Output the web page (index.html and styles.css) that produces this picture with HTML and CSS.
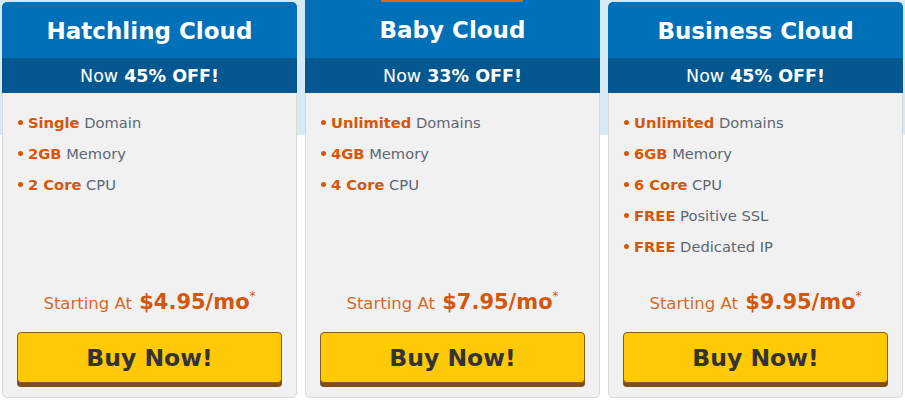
FILE: index.html
```html
<!DOCTYPE html>
<html>
<head>
<meta charset="utf-8">
<link rel="stylesheet" href="styles.css">
</head>
<body>
<div class="page">
  <div class="plans">
    <div class="card">
      <div class="head"><h2 class="title">Hatchling Cloud</h2></div>
      <div class="deal">Now <b>45% OFF!</b></div>
      <div class="body">
        <ul class="features">
          <li><span class="hl">Single</span> Domain</li>
          <li><span class="hl">2GB</span> Memory</li>
          <li><span class="hl">2 Core</span> CPU</li>
        </ul>
        <div class="price">Starting At <b>$4.95/mo</b><sup>*</sup></div>
        <button class="buy">Buy Now!</button>
      </div>
    </div>
    <div class="card featured">
      <div class="ribbon"></div>
      <div class="head"><h2 class="title">Baby Cloud</h2></div>
      <div class="deal">Now <b>33% OFF!</b></div>
      <div class="body">
        <ul class="features">
          <li><span class="hl">Unlimited</span> Domains</li>
          <li><span class="hl">4GB</span> Memory</li>
          <li><span class="hl">4 Core</span> CPU</li>
        </ul>
        <div class="price">Starting At <b>$7.95/mo</b><sup>*</sup></div>
        <button class="buy">Buy Now!</button>
      </div>
    </div>
    <div class="card">
      <div class="head"><h2 class="title">Business Cloud</h2></div>
      <div class="deal">Now <b>45% OFF!</b></div>
      <div class="body">
        <ul class="features">
          <li><span class="hl">Unlimited</span> Domains</li>
          <li><span class="hl">6GB</span> Memory</li>
          <li><span class="hl">6 Core</span> CPU</li>
          <li><span class="hl">FREE</span> Positive SSL</li>
          <li><span class="hl">FREE</span> Dedicated IP</li>
        </ul>
        <div class="price">Starting At <b>$9.95/mo</b><sup>*</sup></div>
        <button class="buy">Buy Now!</button>
      </div>
    </div>
  </div>
</div>
</body>
</html>
```
FILE: styles.css
```css
html, body {
  margin: 0;
  padding: 0;
}
body {
  width: 905px;
  height: 401px;
  overflow: hidden;
  font-family: "DejaVu Sans", "Liberation Sans", sans-serif;
  background: linear-gradient(#d6ebf5 0, #d6ebf5 135px, #ffffff 135px);
}
.page {
  padding: 0 2px;
}
.plans {
  display: flex;
  gap: 8px;
  align-items: flex-start;
}
.card {
  width: 295px;
  margin-top: 2px;
  display: flex;
  flex-direction: column;
  position: relative;
}
.card.featured {
  margin-top: 0;
}
.ribbon {
  position: absolute;
  left: 76px;
  top: 0;
  width: 142px;
  height: 2px;
  background: #dd6a13;
}
.head {
  background: #0070b8;
  height: 56px;
  border-radius: 5px 5px 0 0;
  display: flex;
  align-items: center;
  justify-content: center;
}
.featured .head {
  height: 58px;
  border-radius: 0;
}
.title {
  margin: 0;
  color: #fff;
  font-size: 23px;
  font-weight: 700;
  letter-spacing: 0;
  padding-top: 1px;
}
.deal {
  background: #04578f;
  height: 35px;
  display: flex;
  align-items: center;
  justify-content: center;
  color: #fff;
  font-size: 17.5px;
}
.deal b {
  font-weight: 700;
  margin-left: 6px;
}
.body {
  background: #f1f1f1;
  border: 1px solid #d9d9d9;
  border-top: none;
  border-radius: 0 0 5px 5px;
  height: 305px;
  box-sizing: border-box;
  display: flex;
  flex-direction: column;
  padding: 0 14px 9px;
}
.features {
  list-style: none;
  margin: 0;
  padding: 19px 0 0 1px;
  flex: 1;
}
.features li {
  display: block;
  font-size: 14.7px;
  color: #5d6771;
  height: 31px;
  line-height: 21px;
}
.features li::before {
  content: "";
  display: inline-block;
  width: 5px;
  height: 5px;
  border-radius: 50%;
  background: #d4570b;
  margin-right: 5px;
  vertical-align: middle;
  position: relative;
  top: -2px;
}
.hl {
  color: #d4570b;
  font-weight: 700;
}
.price {
  text-align: center;
  color: #d86a26;
  font-size: 16.5px;
  margin-bottom: 18px;
}
.price b {
  color: #d4570b;
  font-size: 21px;
  font-weight: 700;
  margin-left: 2px;
}
.price sup {
  font-size: 12px;
  color: #d4570b;
  position: relative;
  top: -3px;
}
.buy {
  display: block;
  width: 100%;
  height: 51px;
  background: #ffc907;
  border: 1px solid #8c5a1a;
  border-radius: 4px;
  box-shadow: 0 4px 0 #7d4f1c;
  color: #333;
  font-family: "DejaVu Sans", "Liberation Sans", sans-serif;
  font-size: 23.5px;
  font-weight: 700;
  cursor: pointer;
  margin-bottom: 5px;
}
```
